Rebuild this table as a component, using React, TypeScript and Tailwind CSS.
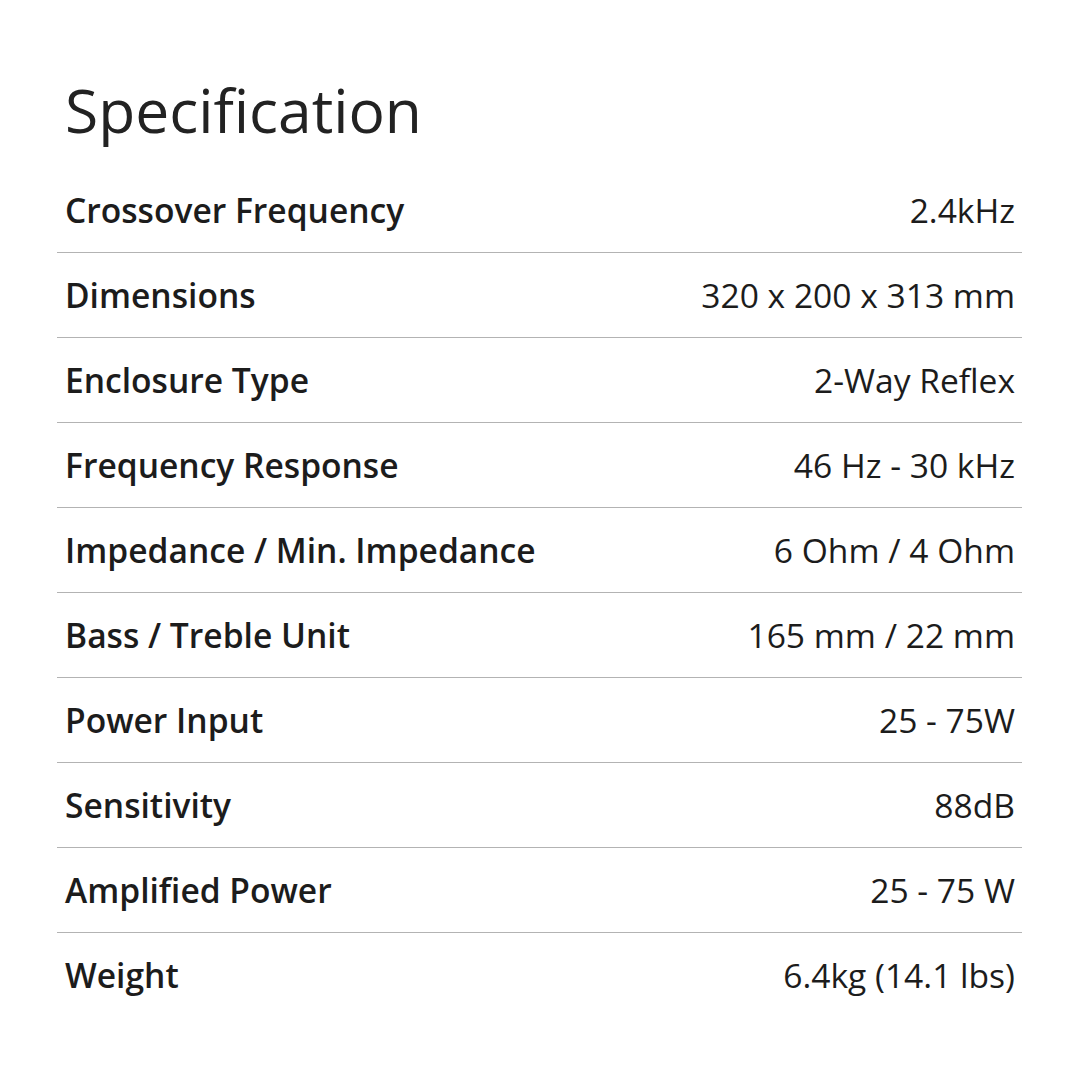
import React from 'react';

const specs: [string, string][] = [
  ['Crossover Frequency', '2.4kHz'],
  ['Dimensions', '320 x 200 x 313 mm'],
  ['Enclosure Type', '2-Way Reflex'],
  ['Frequency Response', '46 Hz - 30 kHz'],
  ['Impedance / Min. Impedance', '6 Ohm / 4 Ohm'],
  ['Bass / Treble Unit', '165 mm / 22 mm'],
  ['Power Input', '25 - 75W'],
  ['Sensitivity', '88dB'],
  ['Amplified Power', '25 - 75 W'],
  ['Weight', '6.4kg (14.1 lbs)'],
];

const App: React.FC = () => {
  return (
    <div className="w-[1080px] h-[1080px] bg-white text-[#1c1c1c] font-['Open_Sans',sans-serif] pl-[57px] pt-[79px]">
      <h1 className="text-[60.5px] leading-[61px] font-normal pl-2 text-[#222]">Specification</h1>
      <div className="w-[965px] mt-[28px]">
        {specs.map(([label, value], i) => (
          <div
            key={label}
            className={`flex items-center justify-between pl-2 pr-[7px] h-[85px] ${i < specs.length - 1 ? 'border-b border-[#b3b3b3]' : ''}`}
          >
            <span className="text-[33.6px] font-semibold">{label}</span>
            <span className="text-[33.6px] font-normal">{value}</span>
          </div>
        ))}
      </div>
    </div>
  );
};

export default App;
